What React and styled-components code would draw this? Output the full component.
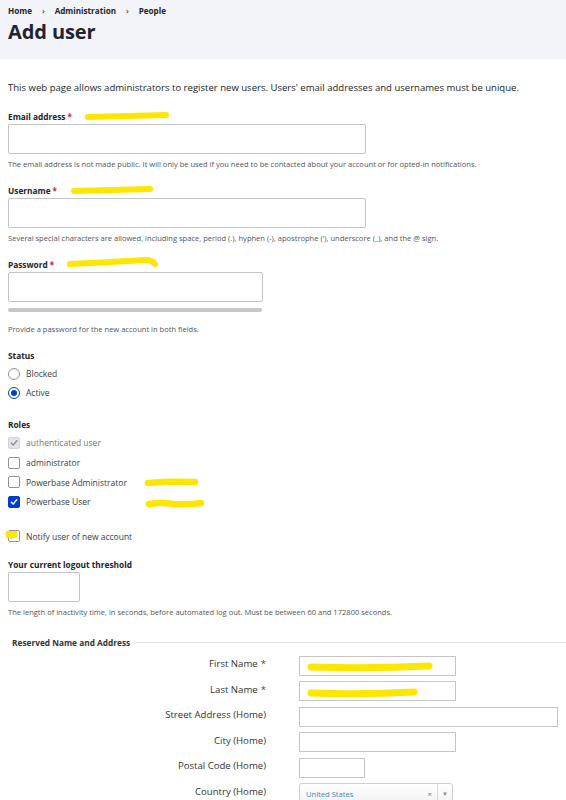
import React from 'react'
import styled, { createGlobalStyle } from 'styled-components'

const GlobalStyle = createGlobalStyle`
    html, body {
        margin: 0;
        padding: 0;
        background: #ffffff;
    }
    body {
        font-family: "Open Sans", "Noto Sans", sans-serif;
        color: #222330;
    }
`

const Page = styled.div`
    width: 566px;
    height: 800px;
    overflow: hidden;
`
const Header = styled.header`
    background-color: #f3f4f9;
    height: 59px;
    padding: 4px 8px 0;
    box-sizing: border-box;
`
const Breadcrumb = styled.nav`
    display: flex;
    align-items: center;
    gap: 10px;
    font-size: 8.1px;
    font-weight: 700;
    line-height: 14px;
`
const Crumb = styled.span``
const Sep = styled.span`
    font-size: 9px;
    font-weight: 400;
`
const PageTitle = styled.h1`
    margin: 0;
    font-size: 20px;
    font-weight: 700;
    line-height: 28px;
    letter-spacing: -0.1px;
`
const Main = styled.main`
    padding: 0 8px;
`
const Intro = styled.p`
    margin: 22px 0 15px;
    font-size: 9.55px;
    line-height: 14px;
    color: #232429;
    white-space: nowrap;
`
const Item = styled.div`
    position: relative;
    margin-bottom: ${p => p.$gap ?? 14}px;
`
const Label = styled.div`
    font-size: 8.3px;
    font-weight: 700;
    line-height: 13px;
    margin-bottom: 1px;
`
const Req = styled.span`
    color: #d72222;
    margin-left: 2px;
    font-size: 8px;
`
const Input = styled.div`
    width: ${p => p.$w}px;
    height: ${p => p.$h ?? 30}px;
    border: 1px solid #c2c3c8;
    border-radius: 2px;
    box-sizing: border-box;
    background: #fff;
`
const Meter = styled.div`
    width: 254px;
    height: 4px;
    margin-top: 6px;
    border-radius: 2px;
    background: #c6c7cc;
`
const Help = styled.div`
    margin-top: ${p => p.$top ?? 4}px;
    font-size: 7.55px;
    line-height: 12px;
    color: #545560;
    white-space: nowrap;
`
const Options = styled.div`
    display: flex;
    flex-direction: column;
    margin-top: ${p => p.$top ?? 2}px;
`
const Option = styled.div`
    display: flex;
    align-items: center;
    gap: 6px;
    height: ${p => p.$h ?? 19}px;
    font-size: 8.5px;
    color: ${p => p.$muted ? '#75767b' : '#3b3c42'};
`
const Radio = styled.span`
    width: 12px;
    height: 12px;
    border-radius: 50%;
    box-sizing: border-box;
    border: 1px solid ${p => p.$on ? '#003ecc' : '#8e929c'};
    display: flex;
    align-items: center;
    justify-content: center;
    &::after {
        content: '';
        width: 6px;
        height: 6px;
        border-radius: 50%;
        background: ${p => p.$on ? '#003ecc' : 'transparent'};
    }
`
const Box = styled.span`
    width: 12px;
    height: 12px;
    border-radius: 2px;
    box-sizing: border-box;
    border: 1px solid ${p => p.$on ? '#003ecc' : p.$disabled ? '#d1d2d6' : '#8e929c'};
    background: ${p => p.$on ? '#003ecc' : p.$disabled ? '#e3e4e8' : '#fff'};
    display: flex;
    align-items: center;
    justify-content: center;
`
const Mark = styled.svg`
    position: absolute;
    left: ${p => p.$x}px;
    top: ${p => p.$y}px;
    pointer-events: none;
    overflow: visible;
`
const Fieldset = styled.section`
    margin-top: 19px;
`
const Legend = styled.div`
    display: flex;
    align-items: center;
    gap: 3px;
    margin: 0 -8px 0 4px;
    font-size: 8.3px;
    font-weight: 700;
    line-height: 12px;
    color: #333;
    &::after {
        content: '';
        flex: 1;
        height: 1px;
        background: #e2e2e2;
    }
`
const Grid = styled.div`
    display: grid;
    grid-template-columns: 258px auto;
    column-gap: 33px;
    row-gap: 5.5px;
    margin-top: 7px;
    justify-content: start;
`
const RowLabel = styled.div`
    text-align: right;
    font-size: 9.6px;
    color: #333;
    align-self: center;
    padding-bottom: 3px;
    line-height: 14px;
    white-space: nowrap;
`
const Star = styled.span`
    color: #a1251b;
    margin-left: 3px;
`
const Field = styled.div`
    position: relative;
    width: ${p => p.$w}px;
    height: 20px;
    border: 1px solid #c5c5c5;
    box-sizing: border-box;
    background: #fff;
`
const Select = styled.div`
    display: flex;
    align-items: center;
    width: 154px;
    height: 21px;
    border: 1px solid #cfcfcf;
    border-radius: 3px;
    box-sizing: border-box;
    background: linear-gradient(#ffffff, #f2f2f2);
    font-size: 7.6px;
    color: #3e87c6;
`
const SelectText = styled.span`
    flex: 1;
    padding-left: 6px;
`
const Clear = styled.span`
    color: #777;
    font-size: 8px;
    padding-right: 5px;
`
const Arrow = styled.span`
    width: 14px;
    align-self: stretch;
    border-left: 1px solid #d8d8d8;
    display: flex;
    align-items: center;
    justify-content: center;
    color: #888;
    font-size: 6px;
`

const yellow = '#ffe600'

const Check = ({ color }) => (
    <svg width="8" height="8" viewBox="0 0 8 8">
        <path d="M1.3 4.2 L3.2 6 L6.8 1.8" fill="none" stroke={color} strokeWidth="1.4" strokeLinecap="round" strokeLinejoin="round" />
    </svg>
)

const Scribble = ({ x, y, w, h, d, sw = 6 }) => (
    <Mark $x={x} $y={y} width={w} height={h}>
        <path d={d} fill="none" stroke={yellow} strokeWidth={sw} strokeLinecap="round" strokeLinejoin="round" />
    </Mark>
)

const rows = [
    { label: 'First Name', req: true, w: 157, mark: 'M11 10 Q70 12 129 9' },
    { label: 'Last Name', req: true, w: 157, mark: 'M11 11 Q60 13 114 10' },
    { label: 'Street Address (Home)', w: 259 },
    { label: 'City (Home)', w: 157 },
    { label: 'Postal Code (Home)', w: 66 },
]

const App = () => {
    return (
        <Page>
            <GlobalStyle />
            <Header>
                <Breadcrumb>
                    <Crumb>Home</Crumb>
                    <Sep>›</Sep>
                    <Crumb>Administration</Crumb>
                    <Sep>›</Sep>
                    <Crumb>People</Crumb>
                </Breadcrumb>
                <PageTitle>Add user</PageTitle>
            </Header>
            <Main>
                <Intro>This web page allows administrators to register new users. Users' email addresses and usernames must be unique.</Intro>

                <Item>
                    <Label>Email address<Req>*</Req></Label>
                    <Scribble x={77} y={2} w={86} h={10} d="M3 5 Q40 4 81 3" />
                    <Input $w={358} />
                    <Help>The email address is not made public. It will only be used if you need to be contacted about your account or for opted-in notifications.</Help>
                </Item>

                <Item>
                    <Label>Username<Req>*</Req></Label>
                    <Scribble x={63} y={1} w={84} h={10} d="M3 6 Q40 5 79 4" />
                    <Input $w={358} />
                    <Help>Several special characters are allowed, including space, period (.), hyphen (-), apostrophe ('), underscore (_), and the @ sign.</Help>
                </Item>

                <Item>
                    <Label>Password<Req>*</Req></Label>
                    <Scribble x={59} y={-1} w={94} h={12} d="M3 7 Q45 5 78 3 Q86 3 88 7" />
                    <Input $w={255} />
                    <Meter />
                    <Help $top={11}>Provide a password for the new account in both fields.</Help>
                </Item>

                <Item $gap={16}>
                    <Label>Status</Label>
                    <Options>
                        <Option><Radio />Blocked</Option>
                        <Option><Radio $on />Active</Option>
                    </Options>
                </Item>

                <Item $gap={15}>
                    <Label>Roles</Label>
                    <Options $top={2}>
                        <Option $h={19.7} $muted><Box $disabled><Check color="#8b8c91" /></Box>authenticated user</Option>
                        <Option $h={19.7}><Box />administrator</Option>
                        <Option $h={19.7}><Box />Powerbase Administrator</Option>
                        <Option $h={19.7}><Box $on><Check color="#fff" /></Box>Powerbase User</Option>
                    </Options>
                    <Scribble x={137} y={60} w={54} h={10} d="M3 5 Q25 3 50 4" sw={6.5} />
                    <Scribble x={138} y={81} w={60} h={10} d="M3 5 Q15 3 28 5 Q42 6 55 4" sw={6.5} />
                </Item>

                <Item $gap={12}>
                    <Option>
                        <Box />Notify user of new account
                    </Option>
                    <Mark $x={-2} $y={3} width={13} height={11}>
                        <path d="M0 1 H11 V8 H6 L5 10 L4 8 H0 Z" fill={yellow} />
                    </Mark>
                </Item>

                <Item>
                    <Label>Your current logout threshold</Label>
                    <Input $w={72} />
                    <Help>The length of inactivity time, in seconds, before automated log out. Must be between 60 and 172800 seconds.</Help>
                </Item>

                <Fieldset>
                    <Legend>Reserved Name and Address</Legend>
                    <Grid>
                        {rows.map(r => (
                            <React.Fragment key={r.label}>
                                <RowLabel>{r.label}{r.req && <Star>*</Star>}</RowLabel>
                                <Field $w={r.w}>
                                    {r.mark && <Scribble x={0} y={0} w={140} h={20} d={r.mark} sw={7} />}
                                </Field>
                            </React.Fragment>
                        ))}
                        <RowLabel>Country (Home)</RowLabel>
                        <Select>
                            <SelectText>United States</SelectText>
                            <Clear>×</Clear>
                            <Arrow>▼</Arrow>
                        </Select>
                    </Grid>
                </Fieldset>
            </Main>
        </Page>
    )
}

export default App
